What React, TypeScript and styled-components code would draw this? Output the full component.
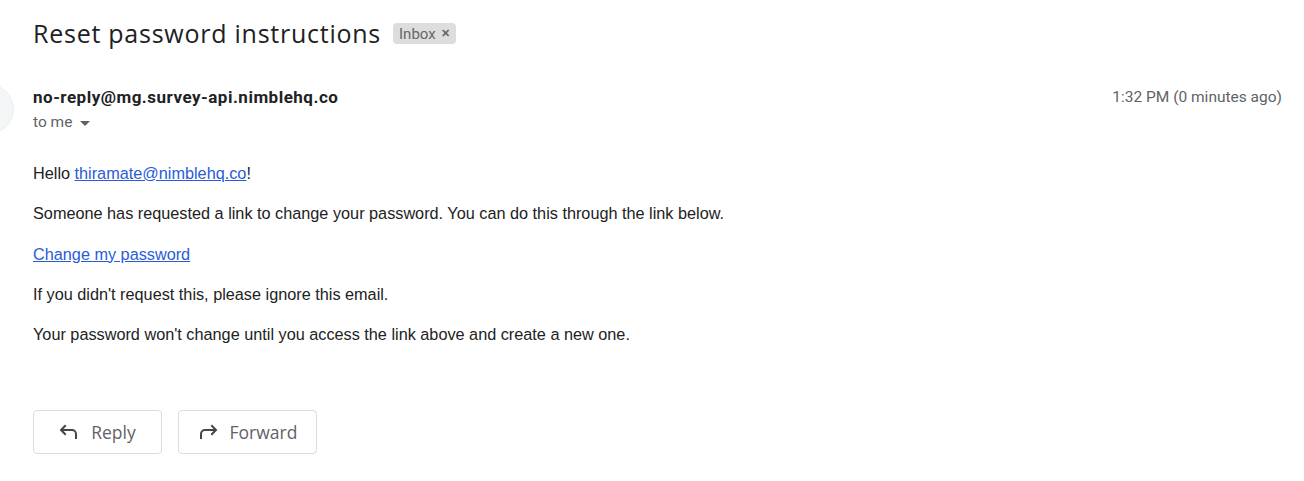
import React from 'react';
import styled, { createGlobalStyle } from 'styled-components';

const GlobalStyle = createGlobalStyle`
  html, body {
    margin: 0;
    padding: 0;
    background: #ffffff;
  }
  body {
    font-family: Roboto, "Liberation Sans", Arial, sans-serif;
    color: #202124;
  }
`;

const Page = styled.div`
  position: relative;
  width: 1304px;
  height: 481px;
  overflow: hidden;
  padding: 0 22px 0 33px;
  box-sizing: border-box;
`;

const TitleRow = styled.div`
  display: flex;
  align-items: center;
  gap: 12px;
  padding-top: 15px;
  height: 36px;
`;

const Title = styled.h1`
  margin: 0;
  font-family: "Open Sans", Roboto, sans-serif;
  font-weight: 400;
  font-size: 25px;
  letter-spacing: 0.75px;
  color: #202124;
`;

const Label = styled.span`
  display: inline-flex;
  align-items: center;
  gap: 5px;
  height: 21px;
  padding: 0 6px;
  border-radius: 4px;
  background: #dddddd;
  color: #666666;
  font-size: 15px;
  margin-top: 1px;
`;

const LabelClose = styled.span`
  font-size: 11px;
  font-weight: 700;
  color: #666666;
`;

const Avatar = styled.div`
  position: absolute;
  left: -36px;
  top: 84px;
  width: 48px;
  height: 48px;
  border-radius: 50%;
  background: #f4f5f6;
  border: 1px solid #eceef0;
`;

const Header = styled.div`
  display: flex;
  justify-content: space-between;
  align-items: flex-start;
  margin-top: 35px;
`;

const Sender = styled.div`
  display: flex;
  flex-direction: column;
  gap: 4px;
`;

const From = styled.div`
  font-weight: 700;
  font-size: 17px;
  letter-spacing: 0.5px;
  line-height: 22px;
  color: #202124;
`;

const ToMe = styled.div`
  display: flex;
  align-items: center;
  gap: 8px;
  font-size: 15.5px;
  line-height: 20px;
  color: #5f6368;
`;

const Caret = styled.span`
  width: 0;
  height: 0;
  border-left: 5px solid transparent;
  border-right: 5px solid transparent;
  border-top: 5px solid #5f6368;
  margin-top: 2px;
`;

const Time = styled.div`
  font-size: 15.5px;
  line-height: 22px;
  color: #5f6368;
`;

const Body = styled.div`
  margin-top: 32px;
  font-family: "Liberation Sans", Arial, sans-serif;
  font-size: 16.25px;
  line-height: 19px;
  color: #222222;
`;

const Para = styled.p`
  margin: 0 0 21.3px;
`;

const Link = styled.a`
  color: #2a5bd7;
  text-decoration: underline;
`;

const Actions = styled.div`
  display: flex;
  gap: 16px;
  margin-top: 66px;
`;

const ActionButton = styled.button<{ $width: number }>`
  display: inline-flex;
  align-items: center;
  justify-content: center;
  gap: 12px;
  width: ${({ $width }) => $width}px;
  height: 44px;
  padding: 0;
  border: 1px solid #dadce0;
  border-radius: 4px;
  background: #ffffff;
  color: #5f6368;
  font-family: "Open Sans", Roboto, sans-serif;
  font-size: 17.5px;
  cursor: pointer;
`;

const ReplyIcon = () => (
  <svg width="20" height="16" viewBox="0 0 20 16" fill="none" stroke="#444746" strokeWidth="2" strokeLinecap="square">
    <path d="M6 2 L2 6 L6 10" strokeLinejoin="miter" />
    <path d="M3 6 H13 a4 4 0 0 1 4 4 V14" />
  </svg>
);

const ForwardIcon = () => (
  <svg width="20" height="16" viewBox="0 0 20 16" fill="none" stroke="#444746" strokeWidth="2" strokeLinecap="square">
    <path d="M14 2 L18 6 L14 10" strokeLinejoin="miter" />
    <path d="M17 6 H7 a4 4 0 0 0 -4 4 V14" />
  </svg>
);

export default function App() {
  return (
    <>
      <GlobalStyle />
      <Page>
        <Avatar />
        <TitleRow>
          <Title>Reset password instructions</Title>
          <Label>
            Inbox <LabelClose>✕</LabelClose>
          </Label>
        </TitleRow>
        <Header>
          <Sender>
            <From>no-reply@mg.survey-api.nimblehq.co</From>
            <ToMe>
              to me <Caret />
            </ToMe>
          </Sender>
          <Time>1:32 PM (0 minutes ago)</Time>
        </Header>
        <Body>
          <Para>
            Hello <Link href="#">thiramate@nimblehq.co</Link>!
          </Para>
          <Para>
            Someone has requested a link to change your password. You can do this through the link below.
          </Para>
          <Para>
            <Link href="#">Change my password</Link>
          </Para>
          <Para>If you didn't request this, please ignore this email.</Para>
          <Para>Your password won't change until you access the link above and create a new one.</Para>
        </Body>
        <Actions>
          <ActionButton $width={129}>
            <ReplyIcon />
            Reply
          </ActionButton>
          <ActionButton $width={139}>
            <ForwardIcon />
            Forward
          </ActionButton>
        </Actions>
      </Page>
    </>
  );
}
